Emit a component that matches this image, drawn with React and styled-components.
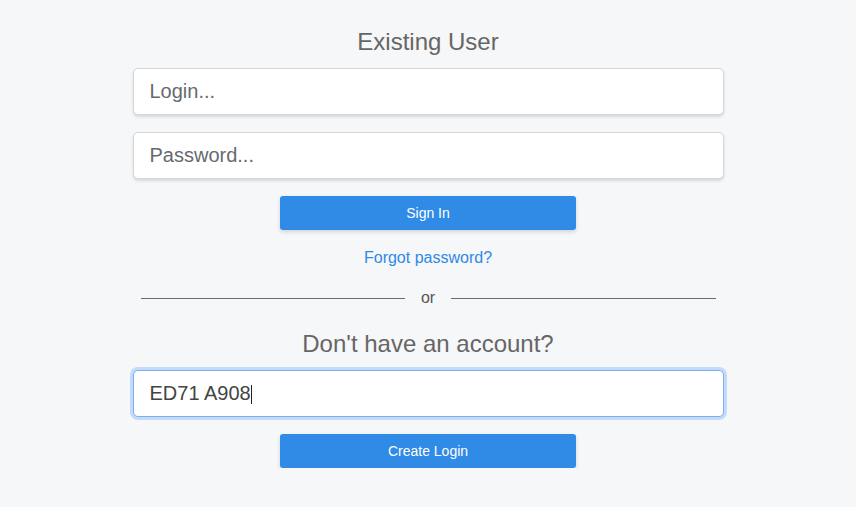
import React, { useEffect, useRef, useState } from "react";
import styled, { createGlobalStyle } from "styled-components";

const GlobalStyle = createGlobalStyle`
    html, body {
        margin: 0;
        padding: 0;
        background-color: #f6f7f9;
        font-family: "Liberation Sans", Arial, sans-serif;
    }
`;

const Page = styled.div`
    width: 591px;
    margin: 0 auto;
    padding-top: 28px;
    display: flex;
    flex-direction: column;
    align-items: center;
`;

const Heading = styled.h2`
    margin: 0 0 12px;
    font-size: 24px;
    line-height: 28px;
    font-weight: 400;
    color: #666666;
    text-align: center;
`;

const FieldWrap = styled.div`
    position: relative;
    width: 100%;
    margin-bottom: 17px;
`;

const Field = styled.input`
    display: block;
    box-sizing: border-box;
    width: 100%;
    height: 47px;
    margin: 0;
    padding: 0 16px;
    font-family: inherit;
    font-size: 20px;
    color: #444;
    background: #fff;
    border: 1px solid ${(p) => (p.$focused ? "#7eaef1" : "#d3d6dc")};
    border-radius: 5px;
    box-shadow: ${(p) =>
        p.$focused
            ? "0 0 0 3px #c4dafb"
            : "0 2px 3px rgba(0, 0, 0, 0.12)"};
    outline: none;
    caret-color: ${(p) => (p.$focused ? "transparent" : "#222")};

    &::placeholder {
        color: #666a70;
    }
`;

/* drawn caret, since the real one blinks out of screenshots */
const Caret = styled.span`
    position: absolute;
    top: 15px;
    width: 1px;
    height: 19px;
    background: #222;
    pointer-events: none;
`;

const Button = styled.button`
    box-sizing: border-box;
    width: 296px;
    height: 34px;
    border: none;
    border-radius: 3px;
    background-color: #308be6;
    color: #fff;
    font-family: inherit;
    font-size: 14px;
    box-shadow: 0 2px 4px rgba(0, 0, 0, 0.14);
    cursor: pointer;
`;

const LinkText = styled.a`
    margin-top: 18px;
    font-size: 16px;
    line-height: 20px;
    color: #2f89e5;
    text-decoration: none;
    cursor: pointer;
`;

const Divider = styled.div`
    width: 575px;
    margin-top: 20px;
    margin-bottom: 22px;
    height: 20px;
    display: flex;
    align-items: center;
    gap: 16px;
    font-size: 16px;
    color: #555;

    &::before, &::after {
        content: "";
        flex: 1;
        height: 1px;
        background: #6b6b6b;
    }
`;

const Measure = styled.span`
    position: absolute;
    visibility: hidden;
    white-space: pre;
    font-family: "Liberation Sans", Arial, sans-serif;
    font-size: 20px;
`;

export default function App() {
    const [code, setCode] = useState("ED71 A908");
    const [caretX, setCaretX] = useState(119);
    const codeRef = useRef(null);
    const measureRef = useRef(null);

    useEffect(() => {
        if (codeRef.current) {
            codeRef.current.focus();
            codeRef.current.setSelectionRange(code.length, code.length);
        }
    }, []);

    useEffect(() => {
        if (measureRef.current) {
            setCaretX(17 + measureRef.current.offsetWidth);
        }
    }, [code]);

    return (
        <>
            <GlobalStyle />
            <Page>
                <Heading>Existing User</Heading>
                <FieldWrap>
                    <Field type="text" placeholder="Login..." />
                </FieldWrap>
                <FieldWrap>
                    <Field type="password" placeholder="Password..." />
                </FieldWrap>
                <Button>Sign In</Button>
                <LinkText>Forgot password?</LinkText>
                <Divider>or</Divider>
                <Heading>Don't have an account?</Heading>
                <FieldWrap>
                    <Field
                        ref={codeRef}
                        type="text"
                        value={code}
                        $focused
                        onChange={(e) => setCode(e.target.value)}
                    />
                    <Measure ref={measureRef}>{code}</Measure>
                    <Caret style={{ left: caretX }} />
                </FieldWrap>
                <Button>Create Login</Button>
            </Page>
        </>
    );
}
